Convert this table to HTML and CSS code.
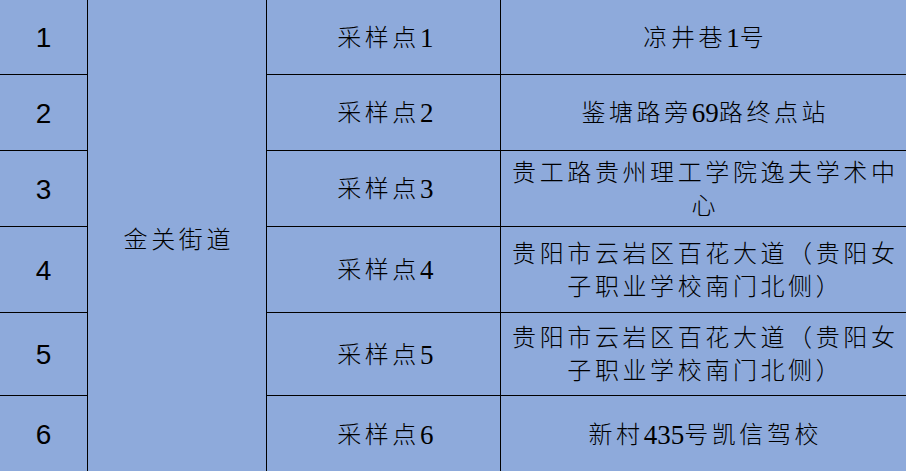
FILE: index.html
```html
<!DOCTYPE html>
<html lang="zh-CN">
<head>
<meta charset="utf-8">
<title>采样点</title>
<link rel="stylesheet" href="styles.css">
</head>
<body>
<div class="sheet">
  <div class="num r1">1</div>
  <div class="street">金关街道</div>
  <div class="txt r1">采样点<span class="d">1</span></div>
  <div class="txt r1">凉井巷<span class="d">1</span>号</div>

  <div class="num r2">2</div>
  <div class="txt r2">采样点<span class="d">2</span></div>
  <div class="txt r2">鉴塘路旁<span class="d">69</span>路终点站</div>

  <div class="num r3">3</div>
  <div class="txt r3">采样点<span class="d">3</span></div>
  <div class="txt r3">贵工路贵州理工学院逸夫学术中<br>心</div>

  <div class="num r4">4</div>
  <div class="txt r4">采样点<span class="d">4</span></div>
  <div class="txt r4">贵阳市云岩区百花大道（贵阳女<br>子职业学校南门北侧）</div>

  <div class="num r5">5</div>
  <div class="txt r5">采样点<span class="d">5</span></div>
  <div class="txt r5">贵阳市云岩区百花大道（贵阳女<br>子职业学校南门北侧）</div>

  <div class="num r6">6</div>
  <div class="txt r6">采样点<span class="d">6</span></div>
  <div class="txt r6">新村<span class="d">435</span>号凯信驾校</div>
</div>
</body>
</html>
```

FILE: styles.css
```css
html, body {
  margin: 0;
  padding: 0;
  background: #8eaadb;
  overflow: hidden;
}

.sheet {
  display: grid;
  grid-template-columns: 87px 178px 233px 1fr;
  grid-template-rows: 74px 75px 75px 85px 82px 76px;
  gap: 1px;
  background: #000;
  width: 906px;
}

.sheet > div {
  background: #8eaadb;
  display: flex;
  align-items: center;
  justify-content: center;
  text-align: center;
  color: #000;
}

.num {
  grid-column: 1;
  font-family: "Liberation Sans", Arial, sans-serif;
  font-size: 28px;
  padding-top: 2px;
}

.street {
  grid-column: 2;
  grid-row: 1 / 7;
  font-family: "Liberation Serif", "Noto Sans CJK SC", serif;
  font-weight: 300;
  font-size: 24px;
  letter-spacing: 3.6px;
  padding-left: 3.6px;
  padding-top: 2px;
}

.txt {
  font-family: "Liberation Serif", "Noto Sans CJK SC", serif;
  font-weight: 300;
  font-size: 24px;
  line-height: 33px;
  letter-spacing: 3.6px;
  padding-left: 3.6px;
  padding-top: 2px;
}

.d {
  font-size: 27px;
  letter-spacing: 0;
}

.r1 { grid-row: 1; }
.r2 { grid-row: 2; }
.r3 { grid-row: 3; }
.r4 { grid-row: 4; }
.r5 { grid-row: 5; }
.r6 { grid-row: 6; }
```
